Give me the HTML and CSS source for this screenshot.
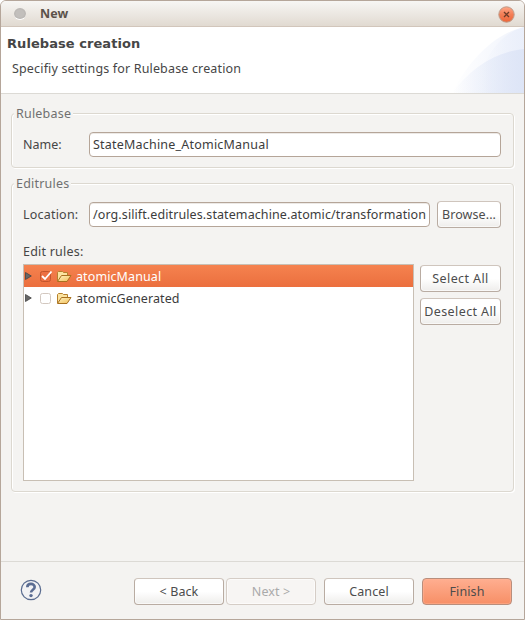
FILE: index.html
```html
<!DOCTYPE html>
<html lang="en">
<head>
<meta charset="utf-8">
<title>New</title>
<link rel="stylesheet" href="styles.css">
</head>
<body>
<svg class="defs" width="0" height="0" aria-hidden="true">
  <defs>
    <linearGradient id="fold" x1="0" y1="0" x2="1" y2="1"><stop offset="0" stop-color="#fff3c4"/><stop offset="1" stop-color="#f0bd55"/></linearGradient>
    <symbol id="folder" viewBox="0 0 16 16">
      <path d="M1.500 12V3.500L2.500 2.500H6.500L7.500 3.500H11.500V6.500" fill="#fbe3a0" stroke="#b5802c"/>
      <path d="M1.500 12.500L5.500 6.500H15L11 12.500Z" fill="url(#fold)" stroke="#a8701f" stroke-linejoin="round"/>
    </symbol>
    <symbol id="arrow" viewBox="0 0 7 8"><path d="M.5 .5V7.500L6.300 4Z" fill="#666" stroke="#444" stroke-width=".8"/></symbol>
  </defs>
</svg>
<main class="window">
  <header class="titlebar">
    <span class="dot"></span>
    <span class="title">New</span>
    <svg class="close" viewBox="0 0 17 17">
      <defs><linearGradient id="cg" x1="0" y1="0" x2="0" y2="1"><stop offset="0" stop-color="#ffa888"/><stop offset=".5" stop-color="#f37e56"/><stop offset="1" stop-color="#ed6538"/></linearGradient></defs>
      <circle cx="8.500" cy="8.500" r="7.700" fill="url(#cg)" stroke="#bd9a88"/>
      <path d="M6 6L11 11M11 6L6 11" stroke="#6d3b28" stroke-width="1.300"/>
    </svg>
  </header>
  <section class="banner">
    <svg class="swoosh" viewBox="0 0 72 66">
      <defs>
        <linearGradient id="s1"><stop offset="0" stop-color="#e9eefa" stop-opacity="0"/><stop offset="1" stop-color="#e9eefa"/></linearGradient>
        <linearGradient id="s2"><stop offset="0" stop-color="#dce4f6" stop-opacity="0"/><stop offset="1" stop-color="#dbe3f6"/></linearGradient>
      </defs>
      <path d="M0 66C15 37 39 8 72 0V66Z" fill="url(#s1)" opacity=".7"/>
      <path d="M30 42C38 24 50 6 72 0V66H30Z" fill="url(#s1)" opacity=".8"/>
      <path d="M0 66C18 42 42 25 72 22V66Z" fill="url(#s2)" opacity=".85"/>
    </svg>
    <h1 class="heading">Rulebase creation</h1>
    <p class="sub">Specifiy settings for Rulebase creation</p>
  </section>
  <section class="content">
    <fieldset class="group group-name">
      <legend class="spaced">Rulebase</legend>
      <div class="row">
        <label class="label">Name:</label>
        <div class="field"><span class="spaced">StateMachine_AtomicManual</span></div>
      </div>
    </fieldset>
    <fieldset class="group group-edit">
      <legend class="spaced">Editrules</legend>
      <div class="row">
        <label class="label spaced">Location:</label>
        <div class="field"><span class="path">/org.silift.editrules.statemachine.atomic/transformation</span></div>
        <button class="btn browse">Browse...</button>
      </div>
      <div class="list-label"><span class="spaced">Edit rules:</span></div>
      <div class="list-row">
        <div class="tree">
          <div class="item selected">
            <svg class="arrow"><use href="#arrow"/></svg>
            <svg class="check" viewBox="0 0 14 13"><rect x="1.500" y="1.500" width="10" height="10" rx="2" fill="#ec7042" stroke="#c4562d"/><path d="M3 6L6 9L12.500 1.500" fill="none" stroke="#fff" stroke-width="1.800"/></svg>
            <svg class="folder"><use href="#folder"/></svg>
            <span>atomicManual</span>
          </div>
          <div class="item">
            <svg class="arrow"><use href="#arrow"/></svg>
            <svg class="check" viewBox="0 0 14 13"><rect x="1.500" y="1.500" width="10" height="10" rx="2" fill="#fff" stroke="#d3c8c0"/></svg>
            <svg class="folder"><use href="#folder"/></svg>
            <span>atomicGenerated</span>
          </div>
        </div>
        <div class="side">
          <button class="btn">Select All</button>
          <button class="btn">Deselect All</button>
        </div>
      </div>
    </fieldset>
  </section>
  <footer class="footer">
    <svg class="help" viewBox="0 0 22 22">
      <circle cx="11" cy="11" r="9.700" fill="#f2f2f4" stroke="#5a6c90" stroke-width="1.200"/>
      <path d="M7.300 8.200C7.300 3.700 14.700 3.900 14.700 8C14.700 10.800 11 10.600 11 13.600" fill="none" stroke="#5b6d93" stroke-width="2.600"/>
      <circle cx="11" cy="16.600" r="1.700" fill="#5b6d93"/>
    </svg>
    <button class="btn">&lt; Back</button>
    <button class="btn disabled">Next &gt;</button>
    <button class="btn cancel">Cancel</button>
    <button class="btn primary">Finish</button>
  </footer>
</main>
</body>
</html>
```
FILE: styles.css
```css
* { box-sizing: border-box; }
body { margin: 0; background: #fff; font: 12.5px/18px "Noto Sans", sans-serif; color: #464646; }
.defs { position: absolute; }
span, label, legend, h1, p, button { white-space: nowrap; }
.spaced { letter-spacing: .21px; }
.path { letter-spacing: .1px; }
.window { width: 525px; height: 620px; border: 1px solid #b5a69a; border-radius: 6px 6px 0 0; background: #f4f3f1; display: flex; flex-direction: column; overflow: hidden; }
.titlebar { height: 26px; flex: none; display: flex; align-items: center; padding: 0 9px 0 13px; background: linear-gradient(#f7f6f4, #e1dad1); border-bottom: 1px solid #d2c6bb; }
.dot { width: 12px; height: 12px; border-radius: 50%; background: radial-gradient(#c2bfbc 45%, #aaa7a4); border-bottom: 1px solid #fff; }
.title { font-weight: 700; margin-left: 14px; color: #5b524a; }
.close { width: 17px; height: 17px; margin-left: auto; margin-top: 2px; }
.banner { position: relative; height: 67px; flex: none; background: #fff; border-bottom: 1px solid #dcdad5; padding: 8px 0 0 6px; }
.swoosh { position: absolute; right: 0; top: 0; width: 72px; height: 66px; }
.heading { margin: 0; font: 700 13px/18px "DejaVu Sans", sans-serif; letter-spacing: .06px; }
.sub { margin: 7px 0 0 5px; letter-spacing: .16px; }
.content { height: 468px; flex: none; padding: 19px 10px 0; border-bottom: 1px solid #dcdad5; }
.group { position: relative; display: block; margin: 0; border: 1px solid #dcd8d0; border-radius: 4px; box-shadow: 1px 1px 0 #fff, inset 1px 1px 0 #fff; padding: 18px 12px 0 11px; min-width: 0; }
.group-name { height: 55px; }
.group-edit { height: 309px; margin-top: 15px; }
legend { position: absolute; top: -9px; left: 2px; padding: 0 2px; background: #f4f3f1; color: #707070; }
.row { display: flex; height: 25px; align-items: center; }
.label { width: 66px; flex: none; }
.field { flex: 1; min-width: 0; height: 25px; border: 1px solid #b5a598; border-radius: 4px; background: #fff; padding: 3px; box-shadow: inset 0 1px 0 #ece9e6; overflow: hidden; line-height: 18px; color: #3c3c3c; }
.btn { font: inherit; color: #4c4c4c; height: 27px; padding: 0; border: 1px solid #b9aca2; border-top-color: #cfc5bd; border-radius: 4px; background: linear-gradient(#fff 50%, #eeedeb); box-shadow: inset 0 0 0 1px rgba(255,255,255,.6); display: flex; align-items: center; justify-content: center; }
.browse { width: 64px; margin-left: 7px; flex: none; letter-spacing: .1px; }
.list-label { height: 18px; margin-top: 16px; }
.list-row { display: flex; margin-top: 3px; gap: 6px; }
.tree { width: 391px; height: 217px; border: 1px solid #c8bfb4; background: #fff; }
.item { height: 22px; display: flex; align-items: center; letter-spacing: .1px; color: #3c3c3c; }
.item.selected { background: linear-gradient(#f5824f, #eb6f3e); color: #fff; }
.arrow { width: 7px; height: 8px; margin-left: 1px; margin-top: -1px; }
.check { width: 14px; height: 13px; margin-left: 7px; }
.folder { width: 16px; height: 16px; margin-left: 3px; margin-top: 2px; }
.item span { margin: 2px 0 0 4px; }
.side { display: flex; flex-direction: column; gap: 6px; padding-top: 1px; width: 81px; }
.side .btn { letter-spacing: .4px; }
.footer { flex: 1; display: flex; align-items: center; padding: 2px 12px 0 19px; }
.help { width: 22px; height: 22px; margin-right: 92px; margin-top: -3px; }
.footer .btn { width: 90px; margin-right: 2px; letter-spacing: .1px; }
.footer .cancel { margin-left: 6px; margin-right: 8px; }
.footer .primary { margin: 0; background: linear-gradient(#ffae90, #f78f66); border-color: #b98e7c; box-shadow: inset 0 0 0 1px rgba(255,180,150,.5); }
.footer .disabled { color: #aaa; background: #f7f5f3; border-color: #d5cdc6; }
```
